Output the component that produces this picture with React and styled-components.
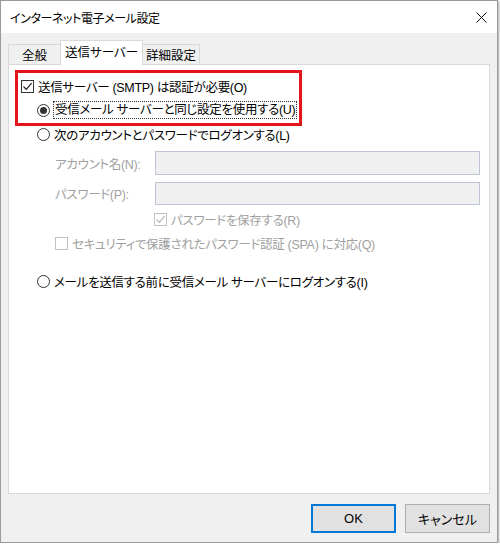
import React from "react";
import styled, { createGlobalStyle } from "styled-components";

const GlobalStyle = createGlobalStyle`
  html, body { margin: 0; padding: 0; background: #ffffff; }
  body {
    font-family: "Liberation Sans", "Noto Sans CJK JP", sans-serif;
    font-feature-settings: "palt";
    color: #000;
  }
  * { box-sizing: border-box; }
`;

const Window = styled.div`
  width: 498px;
  height: 543px;
  border: 1px solid #9a9a9a;
  background: #f0f0f0;
  display: flex;
  flex-direction: column;
  box-shadow: 1px 1px 2px rgba(0, 0, 0, 0.35);
`;

const TitleBar = styled.div`
  height: 32px;
  flex: none;
  background: #ffffff;
  display: flex;
  align-items: center;
  justify-content: space-between;
  padding: 0 10px 0 9px;
  font-size: 12px;
  letter-spacing: -0.4px;
`;

const CloseButton = styled.span`
  width: 12px;
  height: 12px;
  display: flex;
  align-items: center;
  justify-content: center;
`;

const Body = styled.div`
  flex: 1;
  display: flex;
  flex-direction: column;
  padding: 7px 7px 9px 7px;
`;

const TabRow = styled.div`
  height: 24px;
  display: flex;
  align-items: flex-end;
  position: relative;
  z-index: 1;
`;

const Tab = styled.div`
  width: ${(p) => p.$w}px;
  height: ${(p) => (p.$active ? 25 : 20)}px;
  margin-bottom: ${(p) => (p.$active ? -1 : 0)}px;
  margin-left: ${(p) => (p.$first ? 0 : -1)}px;
  background: ${(p) => (p.$active ? "#ffffff" : "#f0f0f0")};
  border: 1px solid #d9d9d9;
  border-bottom: none;
  display: flex;
  align-items: center;
  justify-content: center;
  padding-bottom: ${(p) => (p.$active ? 3 : 0)}px;
  font-size: 12.5px;
  position: relative;
  z-index: ${(p) => (p.$active ? 2 : 1)};
`;

const Panel = styled.div`
  height: 430px;
  flex: none;
  background: #ffffff;
  border: 1px solid #d9d9d9;
  display: flex;
  flex-direction: column;
`;

const RedBox = styled.div`
  width: 287px;
  margin: 5px 0 0 6px;
  border: 3px solid #e5131c;
  padding: 1px 0 1px 3px;
`;

const Row = styled.div`
  display: flex;
  align-items: center;
  height: ${(p) => p.$h}px;
  margin-top: ${(p) => p.$mt || 0}px;
  padding-left: ${(p) => p.$indent || 0}px;
  font-size: 12.5px;
  letter-spacing: -0.3px;
  white-space: nowrap;
  color: ${(p) => (p.$disabled ? "#a0a0a0" : "#000")};
`;

const Label = styled.span`
  margin-left: 4px;
`;

const FocusLabel = styled.span`
  margin-left: 3px;
  padding: 0 1px;
  border: 1px dotted #333;
  line-height: 16px;
`;

const FieldLabel = styled.span`
  width: 100px;
  flex: none;
`;

const TextBox = styled.div`
  width: 325px;
  height: ${(p) => p.$h}px;
  background: #f0f0f0;
  border: 1px solid #bcc5d1;
`;

const Box = styled.span`
  width: 13px;
  height: 13px;
  flex: none;
  border: 1px solid ${(p) => (p.$disabled ? "#c2c2c2" : "#333333")};
  background: #ffffff;
  display: flex;
  align-items: center;
  justify-content: center;
`;

const Radio = styled.span`
  width: 13px;
  height: 13px;
  flex: none;
  border-radius: 50%;
  border: 1px solid #333333;
  background: #ffffff;
  display: flex;
  align-items: center;
  justify-content: center;
  &::after {
    content: "";
    display: ${(p) => (p.$checked ? "block" : "none")};
    width: 7px;
    height: 7px;
    border-radius: 50%;
    background: #333333;
  }
`;

const ButtonRow = styled.div`
  display: flex;
  justify-content: flex-end;
  gap: 9px;
  margin-top: 10px;
`;

const Button = styled.div`
  width: 85px;
  height: 29px;
  background: #e1e1e1;
  border: 1px solid ${(p) => (p.$default ? "#0078d7" : "#adadad")};
  box-shadow: ${(p) => (p.$default ? "inset 0 0 0 1px #0078d7" : "none")};
  display: flex;
  align-items: center;
  justify-content: center;
  font-size: 13px;
`;

const Check = ({ color }) => (
  <svg width="11" height="11" viewBox="0 0 11 11">
    <path d="M1.5 5.5 L4.3 8.3 L9.6 2.2" fill="none" stroke={color} strokeWidth="1.2" />
  </svg>
);

const Checkbox = ({ checked, disabled }) => (
  <Box $disabled={disabled}>
    {checked && <Check color={disabled ? "#b8b8b8" : "#222"} />}
  </Box>
);

export default function App() {
  return (
    <>
      <GlobalStyle />
      <Window>
        <TitleBar>
          <span>インターネット電子メール設定</span>
          <CloseButton>
            <svg width="11" height="11" viewBox="0 0 11 11">
              <path d="M0.5 0.5 L10.5 10.5 M10.5 0.5 L0.5 10.5" stroke="#111" strokeWidth="1" />
            </svg>
          </CloseButton>
        </TitleBar>
        <Body>
          <TabRow>
            <Tab $first $w={53}>全般</Tab>
            <Tab $active $w={83}>送信サーバー</Tab>
            <Tab $w={58}>詳細設定</Tab>
          </TabRow>
          <Panel>
            <RedBox>
              <Row $h={24}>
                <Checkbox checked />
                <Label>送信サーバー (SMTP) は認証が必要(O)</Label>
              </Row>
              <Row $h={24} $indent={16}>
                <Radio $checked />
                <FocusLabel>受信メール サーバーと同じ設定を使用する(U)</FocusLabel>
              </Row>
            </RedBox>
            <Row $h={16} $indent={28}>
              <Radio />
              <Label>次のアカウントとパスワードでログオンする(L)</Label>
            </Row>
            <Row $h={24} $mt={9} $indent={46} $disabled>
              <FieldLabel>アカウント名(N):</FieldLabel>
              <TextBox $h={24} />
            </Row>
            <Row $h={24} $mt={6} $indent={46} $disabled>
              <FieldLabel>パスワード(P):</FieldLabel>
              <TextBox $h={23} />
            </Row>
            <Row $h={16} $mt={6} $indent={145} $disabled>
              <Checkbox checked disabled />
              <Label>パスワードを保存する(R)</Label>
            </Row>
            <Row $h={16} $mt={8} $indent={46} $disabled>
              <Checkbox disabled />
              <Label>セキュリティで保護されたパスワード認証 (SPA) に対応(Q)</Label>
            </Row>
            <Row $h={16} $mt={22} $indent={28}>
              <Radio />
              <Label>メールを送信する前に受信メール サーバーにログオンする(I)</Label>
            </Row>
          </Panel>
          <ButtonRow>
            <Button $default>OK</Button>
            <Button>キャンセル</Button>
          </ButtonRow>
        </Body>
      </Window>
    </>
  );
}
